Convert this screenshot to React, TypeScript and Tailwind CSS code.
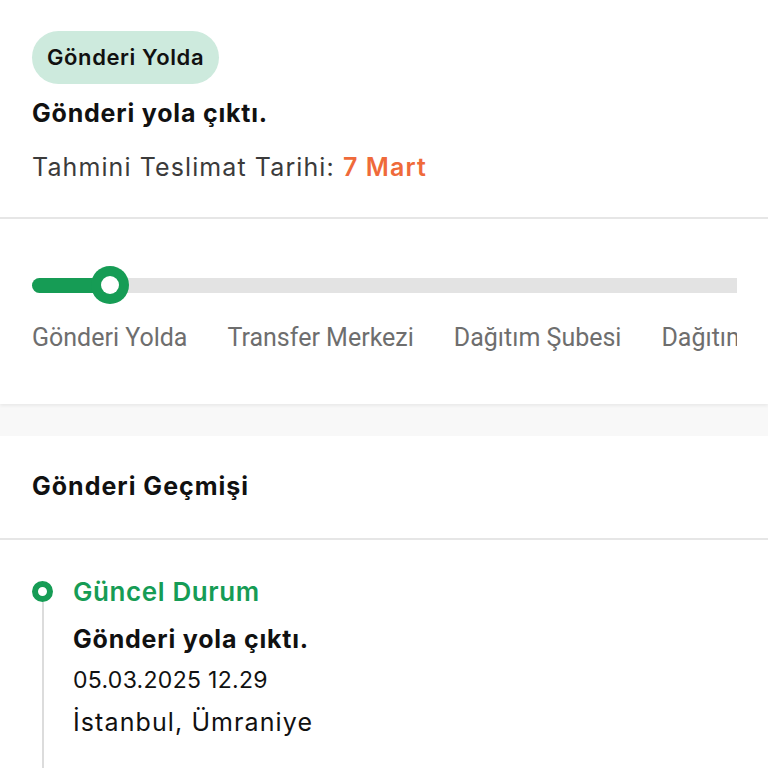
const steps = ["Gönderi Yolda", "Transfer Merkezi", "Dağıtım Şubesi", "Dağıtım Noktası"];

export default function App() {
  return (
    <div className="min-h-[768px] w-[768px] overflow-hidden bg-[#f8f8f8] font-['Inter',sans-serif]">
      <div className="bg-white px-8 pt-[31px] pb-[34px]">
        <div className="inline-flex h-[53px] items-center rounded-full bg-[#cdeadd] px-[15px] text-[22px] font-semibold tracking-[0.6px] text-[#111]">
          Gönderi Yolda
        </div>
        <p className="mt-[13px] text-[25px] leading-8 font-bold tracking-[0.8px] text-[#111]">Gönderi yola çıktı.</p>
        <p className="mt-[22px] text-[25px] leading-8 tracking-[1.1px] text-[#3b3b3b]">
          Tahmini Teslimat Tarihi: <span className="font-semibold text-[#ef6a3a]">7 Mart</span>
        </p>
      </div>
      <div className="h-[2px] bg-[#e6e6e6]" />

      <div className="bg-white pt-[47px] pr-[31px] pb-[50px] pl-8 shadow-[0_2px_3px_rgba(0,0,0,0.06)]">
        <div className="relative h-[38px]">
          <div className="absolute top-[12px] left-0 h-[15px] w-full rounded-l-full bg-[#e3e3e3]" />
          <div className="absolute top-[12px] left-0 h-[15px] w-[80px] rounded-full bg-[#169c55]" />
          <div className="absolute top-0 left-[59px] flex h-[38px] w-[38px] items-center justify-center rounded-full bg-[#169c55]">
            <div className="h-[18px] w-[18px] rounded-full bg-white" />
          </div>
        </div>
        <div className="mt-[18px] flex gap-[40px] overflow-hidden font-['Roboto',sans-serif] text-[25px] leading-8 whitespace-nowrap text-[#6e6e6e]">
          {steps.map((s) => (
            <span key={s}>{s}</span>
          ))}
        </div>
      </div>

      <div className="mt-[32px] bg-white">
        <div className="flex h-[102px] items-center px-8 text-[25px] font-bold tracking-[1px] text-[#111]">Gönderi Geçmişi</div>
        <div className="h-[2px] bg-[#e6e6e6]" />
        <div className="flex gap-[20px] pt-[36px] pl-8">
          <div className="flex w-[21px] flex-col items-center">
            <div className="mt-[5px] h-[21px] w-[21px] rounded-full border-[6px] border-[#169c55]" />
            <div className="h-[200px] w-[2px] bg-[#dcdcdc]" />
          </div>
          <div className="text-[#111]">
            <p className="text-[26px] leading-8 font-semibold tracking-[0.6px] text-[#169c55]">Güncel Durum</p>
            <p className="mt-[15px] text-[25px] leading-8 font-bold tracking-[0.8px]">Gönderi yola çıktı.</p>
            <p className="mt-[9px] text-[23px] leading-8 tracking-[0.3px]">05.03.2025 12.29</p>
            <p className="mt-[10px] text-[25px] leading-8 tracking-[1.1px]">İstanbul, Ümraniye</p>
          </div>
        </div>
      </div>
    </div>
  );
}
